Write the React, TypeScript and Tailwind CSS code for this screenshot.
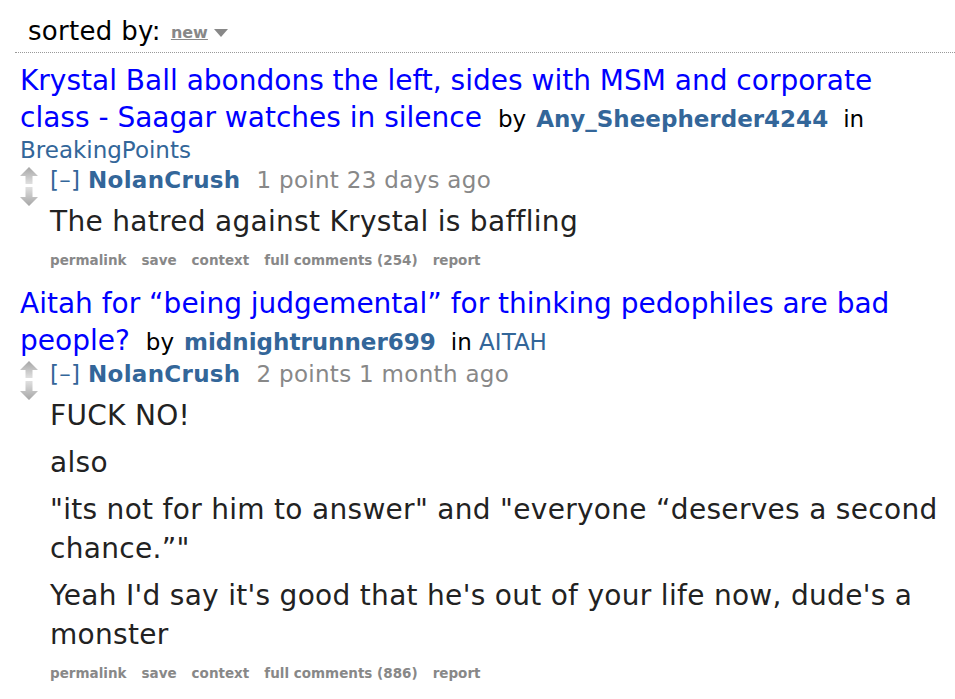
import React from "react";

const FONT = "font-['Verdana','DejaVu_Sans',sans-serif]";

function Arrows() {
  return (
    <div className="flex w-[30px] shrink-0 flex-col pt-[2px]">
      <svg width="18" height="17" viewBox="0 0 18 17">
        <defs>
          <linearGradient id="up" x1="0" y1="0" x2="0" y2="1">
            <stop offset="0" stopColor="#a6a6a6" />
            <stop offset="1" stopColor="#e0e0e0" />
          </linearGradient>
        </defs>
        <path d="M9 0 L18 9 L12.5 9 L12.5 17 L5.5 17 L5.5 9 L0 9 Z" fill="url(#up)" />
      </svg>
      <svg width="18" height="19" viewBox="0 0 18 19" className="mt-[3px]">
        <defs>
          <linearGradient id="down" x1="0" y1="0" x2="0" y2="1">
            <stop offset="0" stopColor="#e0e0e0" />
            <stop offset="1" stopColor="#a6a6a6" />
          </linearGradient>
        </defs>
        <path d="M5.5 0 L12.5 0 L12.5 10 L18 10 L9 19 L0 10 L5.5 10 Z" fill="url(#down)" />
      </svg>
    </div>
  );
}

function Buttons({ count }: { count: number }) {
  return (
    <ul className="flex gap-[15px] text-[13.5px] font-bold leading-[20px] text-[#888]">
      <li>permalink</li>
      <li>save</li>
      <li>context</li>
      <li>full comments ({count})</li>
      <li>report</li>
    </ul>
  );
}

function Tagline({ points }: { points: string }) {
  return (
    <p className="text-[23px] leading-[30px] tracking-[0.3px]">
      <span className="text-[#369]">[–]</span>{" "}
      <span className="font-bold text-[#369]">NolanCrush</span>
      <span className="ml-[16px] text-[#888]">{points}</span>
    </p>
  );
}

function Item({
  title,
  author,
  sub,
  points,
  body,
  count,
}: {
  title: string;
  author: string;
  sub: string;
  points: string;
  body: string[];
  count: number;
}) {
  return (
    <div className="pl-[20px] pr-[12px]">
      <p className="text-[23px] leading-[29px] text-black">
        <a className="text-[28px] leading-[37px] text-[#0000ff]">{title}</a>
        <span className="ml-[16px]">by</span>
        <a className="ml-[10px] font-bold text-[#369]">{author}</a>
        <span className="ml-[15px]">in</span>{" "}
        <a className="text-[#369]">{sub}</a>
      </p>
      <div className="flex">
        <Arrows />
        <div className="flex-1">
          <Tagline points={points} />
          <div className="mt-[7px] flex flex-col gap-[8px] text-[28px] leading-[39px] tracking-[0.3px] text-[#222]">
            {body.map((t, i) => (
              <p key={i}>{t}</p>
            ))}
          </div>
          <div className="mt-[9px] pb-[15px]">
            <Buttons count={count} />
          </div>
        </div>
      </div>
    </div>
  );
}

export default function App() {
  return (
    <div className={`h-[699px] w-[955px] overflow-hidden bg-white ${FONT}`}>
      <div className="ml-[15px] flex items-center border-b border-dotted border-[#999] pt-[15px] pb-[5px] pl-[13px]">
        <span className="text-[26px] leading-[32px] tracking-[0.3px] text-black">sorted by:</span>
        <span className="ml-[10px] mt-[4px] text-[16px] font-bold leading-[20px] text-[#888] underline">new</span>
        <svg width="14" height="8" viewBox="0 0 14 8" className="ml-[6px] mt-[3px]">
          <path d="M0 0 L14 0 L7 8 Z" fill="#888" />
        </svg>
      </div>
      <div className="pt-[9px]">
        <Item
          title="Krystal Ball abondons the left, sides with MSM and corporate class - Saagar watches in silence"
          author="Any_Sheepherder4244"
          sub="BreakingPoints"
          points="1 point 23 days ago"
          body={["The hatred against Krystal is baffling"]}
          count={254}
        />
        <Item
          title="Aitah for “being judgemental” for thinking pedophiles are bad people?"
          author="midnightrunner699"
          sub="AITAH"
          points="2 points 1 month ago"
          body={[
            "FUCK NO!",
            "also",
            "\"its not for him to answer\" and \"everyone “deserves a second chance.”\"",
            "Yeah I'd say it's good that he's out of your life now, dude's a monster",
          ]}
          count={886}
        />
      </div>
    </div>
  );
}
